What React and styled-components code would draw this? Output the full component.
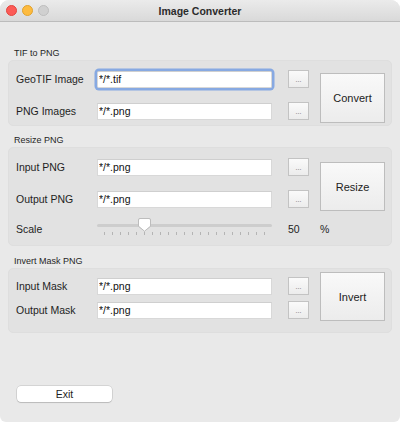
import React from "react";
import styled, { createGlobalStyle } from "styled-components";

const GlobalStyle = createGlobalStyle`
  * { box-sizing: border-box; }
  html, body { margin: 0; padding: 0; background: #fff; }
  body { font-family: "Liberation Sans", Arial, sans-serif; }
`;

const SLIDER_MAX = 200;
const SLIDER_VALUE = 50;

function App() {
  const pos = SLIDER_VALUE / SLIDER_MAX;

  return (
    <>
      <GlobalStyle />
      <Window>
        <TitleBar>
          <Lights>
            <Light $color="#fc5b57" $border="#e2463f" />
            <Light $color="#fdbb3f" $border="#e0a12d" />
            <Light $color="#d0d0d0" $border="#bdbdbd" />
          </Lights>
          <Title>Image Converter</Title>
        </TitleBar>

        <Body>
          <Section>
            <SectionTitle>TIF to PNG</SectionTitle>
            <Group $pt={7} $pb={3} $rows="24px 24px" $gap={8}>
              <Label>GeoTIF Image</Label>
              <TextInput defaultValue="*/*.tif" $focused />
              <DotsButton>...</DotsButton>
              <BigButton $h={50}>Convert</BigButton>
              <Label>PNG Images</Label>
              <TextInput defaultValue="*/*.png" />
              <DotsButton>...</DotsButton>
            </Group>
          </Section>

          <Section $mt={9}>
            <SectionTitle>Resize PNG</SectionTitle>
            <Group $pt={8} $pb={7} $rows="24px 24px 20px" $gap={8}>
              <Label>Input PNG</Label>
              <TextInput defaultValue="*/*.png" />
              <DotsButton>...</DotsButton>
              <BigButton $h={49}>Resize</BigButton>
              <Label>Output PNG</Label>
              <TextInput defaultValue="*/*.png" />
              <DotsButton>...</DotsButton>
              <Label>Scale</Label>
              <Slider>
                <Track />
                <Thumb style={{ left: `calc(${pos * 100}% - ${pos * 13}px)` }}>
                  <svg width="13" height="14" viewBox="0 0 13 14">
                    <path
                      d="M2 0.5 H11 Q12.5 0.5 12.5 2 V8.2 L6.5 13.2 L0.5 8.2 V2 Q0.5 0.5 2 0.5 Z"
                      fill="#fff"
                      stroke="#bdbdbd"
                    />
                  </svg>
                </Thumb>
                <Ticks>
                  {Array.from({ length: 21 }).map((_, i) => (
                    <Tick key={i} />
                  ))}
                </Ticks>
              </Slider>
              <Value>50</Value>
              <Unit>%</Unit>
            </Group>
          </Section>

          <Section $mt={10}>
            <SectionTitle>Invert Mask PNG</SectionTitle>
            <Group $pt={6} $pb={11} $rows="24px 24px" $gap={0}>
              <Label>Input Mask</Label>
              <TextInput defaultValue="*/*.png" />
              <DotsButton>...</DotsButton>
              <BigButton $h={49} $shift={1}>Invert</BigButton>
              <Label>Output Mask</Label>
              <TextInput defaultValue="*/*.png" />
              <DotsButton>...</DotsButton>
            </Group>
          </Section>

          <ExitButton>Exit</ExitButton>
        </Body>
      </Window>
    </>
  );
}

export default App;

const Window = styled.div`
  width: 400px;
  height: 422px;
  background: #e9e9e9;
  border-radius: 9px 9px 6px 6px;
  overflow: hidden;
  display: flex;
  flex-direction: column;
`;

const TitleBar = styled.div`
  height: 22px;
  flex-shrink: 0;
  position: relative;
  display: flex;
  align-items: center;
  justify-content: center;
  background: linear-gradient(#ebebeb, #d9d9d9);
  border-bottom: 1px solid #bcbcbc;
`;

const Lights = styled.div`
  position: absolute;
  left: 6px;
  top: 5px;
  display: flex;
  gap: 5px;
`;

const Light = styled.span`
  width: 11px;
  height: 11px;
  border-radius: 50%;
  background: ${(p) => p.$color};
  border: 0.5px solid ${(p) => p.$border};
`;

const Title = styled.div`
  font-size: 10.5px;
  font-weight: bold;
  color: #2b2b2b;
`;

const Body = styled.div`
  padding: 26px 8px 0 8px;
  display: flex;
  flex-direction: column;
`;

const Section = styled.div`
  margin-top: ${(p) => p.$mt || 0}px;
`;

const SectionTitle = styled.div`
  font-size: 9px;
  line-height: 11px;
  height: 11px;
  margin: 0 0 1px 6px;
  color: #262626;
`;

const Group = styled.div`
  background: #e2e2e2;
  border: 1px solid #dedede;
  border-radius: 5px;
  padding: ${(p) => p.$pt - 1}px 7px ${(p) => p.$pb - 1}px 7px;
  display: grid;
  grid-template-columns: 81px 175px 37px 76px;
  grid-template-rows: ${(p) => p.$rows};
  row-gap: ${(p) => p.$gap}px;
  align-items: center;
`;

const Label = styled.div`
  grid-column: 1;
  font-size: 10.5px;
  color: #1e1e1e;
`;

const TextInput = styled.input`
  grid-column: 2;
  height: 17px;
  width: 175px;
  border: 1px solid #d8d8d8;
  border-top-color: #cfcfcf;
  background: #fff;
  padding: 0 0 0 1px;
  font-family: "Liberation Sans", Arial, sans-serif;
  font-size: 10.5px;
  color: #111;
  outline: none;
  border-radius: ${(p) => (p.$focused ? "2px" : "0")};
  box-shadow: ${(p) =>
    p.$focused ? "0 0 0 2.5px rgba(104, 150, 226, 0.75)" : "none"};
`;

const DotsButton = styled.button`
  grid-column: 3;
  justify-self: end;
  width: 21px;
  height: 18px;
  padding: 0 0 4px 0;
  border: 1px solid #c3c3c3;
  background: linear-gradient(#fafafa, #ececec);
  font-family: "Liberation Sans", Arial, sans-serif;
  font-size: 7px;
  line-height: 1;
  color: #666;
  display: flex;
  align-items: flex-end;
  justify-content: center;
`;

const BigButton = styled.button`
  grid-column: 4;
  grid-row: 1 / span 2;
  justify-self: end;
  align-self: end;
  width: 65px;
  height: ${(p) => p.$h}px;
  margin-bottom: ${(p) => p.$shift || 0}px;
  border: 1px solid #bdbdbd;
  background: linear-gradient(#f9f9f9, #ececec);
  font-family: "Liberation Sans", Arial, sans-serif;
  font-size: 11px;
  color: #222;
  padding: 0;
`;

const Slider = styled.div`
  grid-column: 2;
  position: relative;
  height: 20px;
  align-self: stretch;
`;

const Track = styled.div`
  position: absolute;
  left: 0;
  right: 0;
  top: 5px;
  height: 3px;
  border-radius: 2px;
  background: #cdcdcd;
`;

const Thumb = styled.div`
  position: absolute;
  top: -1px;
  width: 13px;
  height: 14px;
  display: flex;
  filter: drop-shadow(0 0.5px 0.5px rgba(0, 0, 0, 0.15));
`;

const Ticks = styled.div`
  position: absolute;
  left: 7px;
  right: 7px;
  top: 13px;
  display: flex;
  justify-content: space-between;
`;

const Tick = styled.span`
  width: 1px;
  height: 3px;
  background: #b4b4b4;
`;

const Value = styled.div`
  grid-column: 3;
  justify-self: end;
  width: 21px;
  font-size: 10.5px;
  color: #1e1e1e;
`;

const Unit = styled.div`
  grid-column: 4;
  justify-self: end;
  width: 65px;
  font-size: 10.5px;
  color: #1e1e1e;
`;

const ExitButton = styled.button`
  align-self: flex-start;
  margin: 53px 0 0 9px;
  width: 95px;
  height: 16px;
  padding: 0;
  border: none;
  border-radius: 4px;
  background: #fff;
  box-shadow: 0 0 0 0.5px rgba(0, 0, 0, 0.18), 0 1px 1px rgba(0, 0, 0, 0.12);
  font-family: "Liberation Sans", Arial, sans-serif;
  font-size: 10.5px;
  color: #1e1e1e;
`;
